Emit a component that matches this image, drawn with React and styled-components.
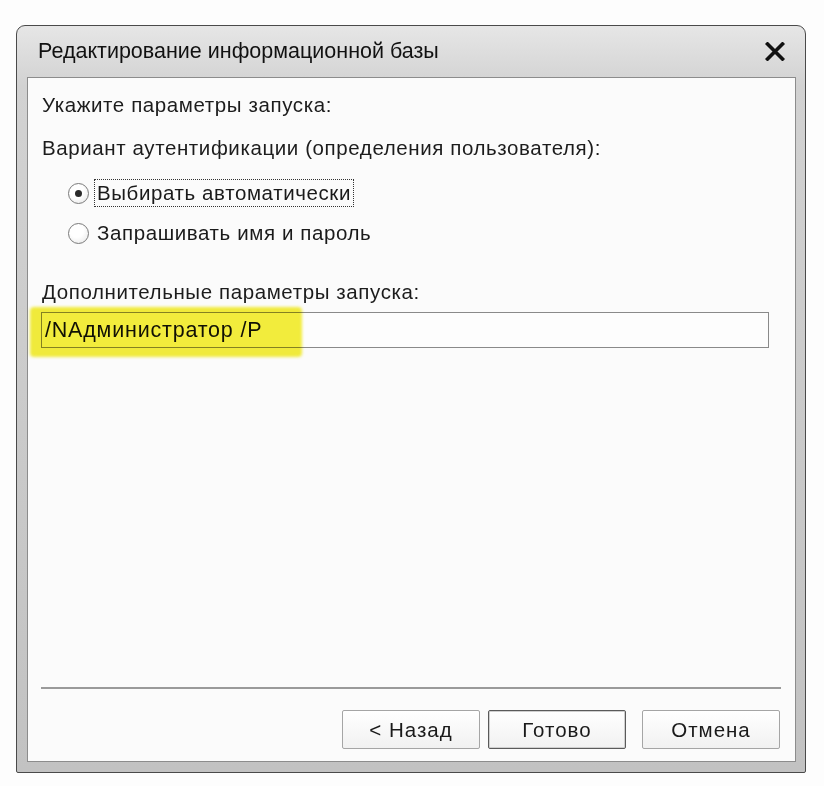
import React from "react";
import styled, { createGlobalStyle } from "styled-components";

const GlobalStyle = createGlobalStyle`
  html, body {
    margin: 0;
    padding: 0;
    background: #fdfdfd;
  }
  body {
    font-family: "Liberation Sans", Arial, sans-serif;
    color: #1a1a1a;
  }
`;

const Page = styled.div`
  width: 824px;
  height: 786px;
  padding: 25px 0 0 16px;
  box-sizing: border-box;
`;

const Window = styled.div`
  width: 790px;
  height: 748px;
  box-sizing: border-box;
  border: 1px solid #4a4a4a;
  border-radius: 9px 9px 2px 2px;
  background: linear-gradient(to bottom, #e6e6e6 0%, #d2d2d2 8%, #c2c2c2 100%);
  display: flex;
  flex-direction: column;
  padding: 0 9px 10px 10px;
`;

const TitleBar = styled.div`
  height: 51px;
  display: flex;
  align-items: center;
  justify-content: space-between;
  padding: 0 11px 0 11px;
`;

const Title = styled.div`
  font-size: 21.5px;
  color: #111;
`;

const CloseButton = styled.div`
  width: 20px;
  height: 20px;
  display: flex;
  align-items: center;
  justify-content: center;
`;

const Content = styled.div`
  flex: 1;
  background: #fbfbfb;
  border: 1px solid #8c8c8c;
  display: flex;
  flex-direction: column;
  padding: 15px 14px 12px 14px;
`;

const Label = styled.div`
  font-size: 20.5px;
  letter-spacing: 0.6px;
  line-height: 24px;
  color: #1c1c1c;
  margin-top: ${(props) => props.gap || 0}px;
`;

const RadioGroup = styled.div`
  display: flex;
  flex-direction: column;
  gap: 12px;
  margin-top: 19px;
  padding-left: 26px;
`;

const RadioRow = styled.div`
  display: flex;
  align-items: center;
  gap: 5px;
  height: 28px;
`;

const Circle = styled.div`
  width: 19px;
  height: 19px;
  border-radius: 50%;
  border: 1px solid #7a7a7a;
  background: radial-gradient(circle at 40% 35%, #ffffff 40%, #e4e4e4 100%);
  display: flex;
  align-items: center;
  justify-content: center;
  flex-shrink: 0;
`;

const Dot = styled.div`
  width: 7px;
  height: 7px;
  border-radius: 50%;
  background: #2a2a2a;
`;

const RadioText = styled.span`
  font-size: 20.5px;
  letter-spacing: 0.6px;
  line-height: 24px;
  padding: 1px 2px;
  border: 1px dotted ${(props) => (props.focused ? "#333" : "transparent")};
`;

const FieldWrap = styled.div`
  position: relative;
  margin-top: 8px;
  margin-left: -1px;
  width: 728px;
`;

const Input = styled.div`
  height: 36px;
  box-sizing: border-box;
  border: 1.5px solid #8a8a8a;
  background: #fdfdfd;
  font-size: 21.5px;
  letter-spacing: 0.8px;
  display: flex;
  align-items: center;
  padding-left: 3px;
  color: #111;
`;

const Highlight = styled.div`
  position: absolute;
  left: -11px;
  top: -5px;
  width: 272px;
  height: 50px;
  background: #f4ee3c;
  mix-blend-mode: multiply;
  border-radius: 4px;
  filter: blur(1.5px);
  pointer-events: none;
`;

const Spacer = styled.div`
  flex: 1;
`;

const Separator = styled.div`
  height: 2px;
  background: #9a9a9a;
  margin: 0 0 21px -1px;
`;

const Buttons = styled.div`
  display: flex;
  justify-content: flex-end;
  padding-right: 1px;
`;

const Button = styled.div`
  width: 138px;
  height: 39px;
  box-sizing: border-box;
  border: 1px solid ${(props) => (props.primary ? "#5a5a5a" : "#a5a5a5")};
  box-shadow: ${(props) => (props.primary ? "inset 0 0 0 1px #cfcfcf" : "none")};
  border-radius: 2px;
  background: linear-gradient(to bottom, #ffffff, #f1f1f1);
  display: flex;
  align-items: center;
  justify-content: center;
  font-size: 20.5px;
  letter-spacing: 1px;
  color: #1a1a1a;
  margin-left: ${(props) => props.gap || 0}px;
`;

const CloseIcon = () => (
  <svg width="20" height="19" viewBox="0 0 20 19">
    <path d="M2.5 2 L17.5 17 M17.5 2 L2.5 17" stroke="#111" strokeWidth="3.6" strokeLinecap="square" />
  </svg>
);

const App = () => {
  return (
    <Page>
      <GlobalStyle />
      <Window>
        <TitleBar>
          <Title>Редактирование информационной базы</Title>
          <CloseButton>
            <CloseIcon />
          </CloseButton>
        </TitleBar>
        <Content>
          <Label>Укажите параметры запуска:</Label>
          <Label gap={19}>Вариант аутентификации (определения пользователя):</Label>
          <RadioGroup>
            <RadioRow>
              <Circle>
                <Dot />
              </Circle>
              <RadioText focused>Выбирать автоматически</RadioText>
            </RadioRow>
            <RadioRow>
              <Circle />
              <RadioText>Запрашивать имя и пароль</RadioText>
            </RadioRow>
          </RadioGroup>
          <Label gap={33}>Дополнительные параметры запуска:</Label>
          <FieldWrap>
            <Input>/NАдминистратор /P</Input>
            <Highlight />
          </FieldWrap>
          <Spacer />
          <Separator />
          <Buttons>
            <Button>&lt; Назад</Button>
            <Button primary gap={8}>Готово</Button>
            <Button gap={16}>Отмена</Button>
          </Buttons>
        </Content>
      </Window>
    </Page>
  );
};

export default App;
